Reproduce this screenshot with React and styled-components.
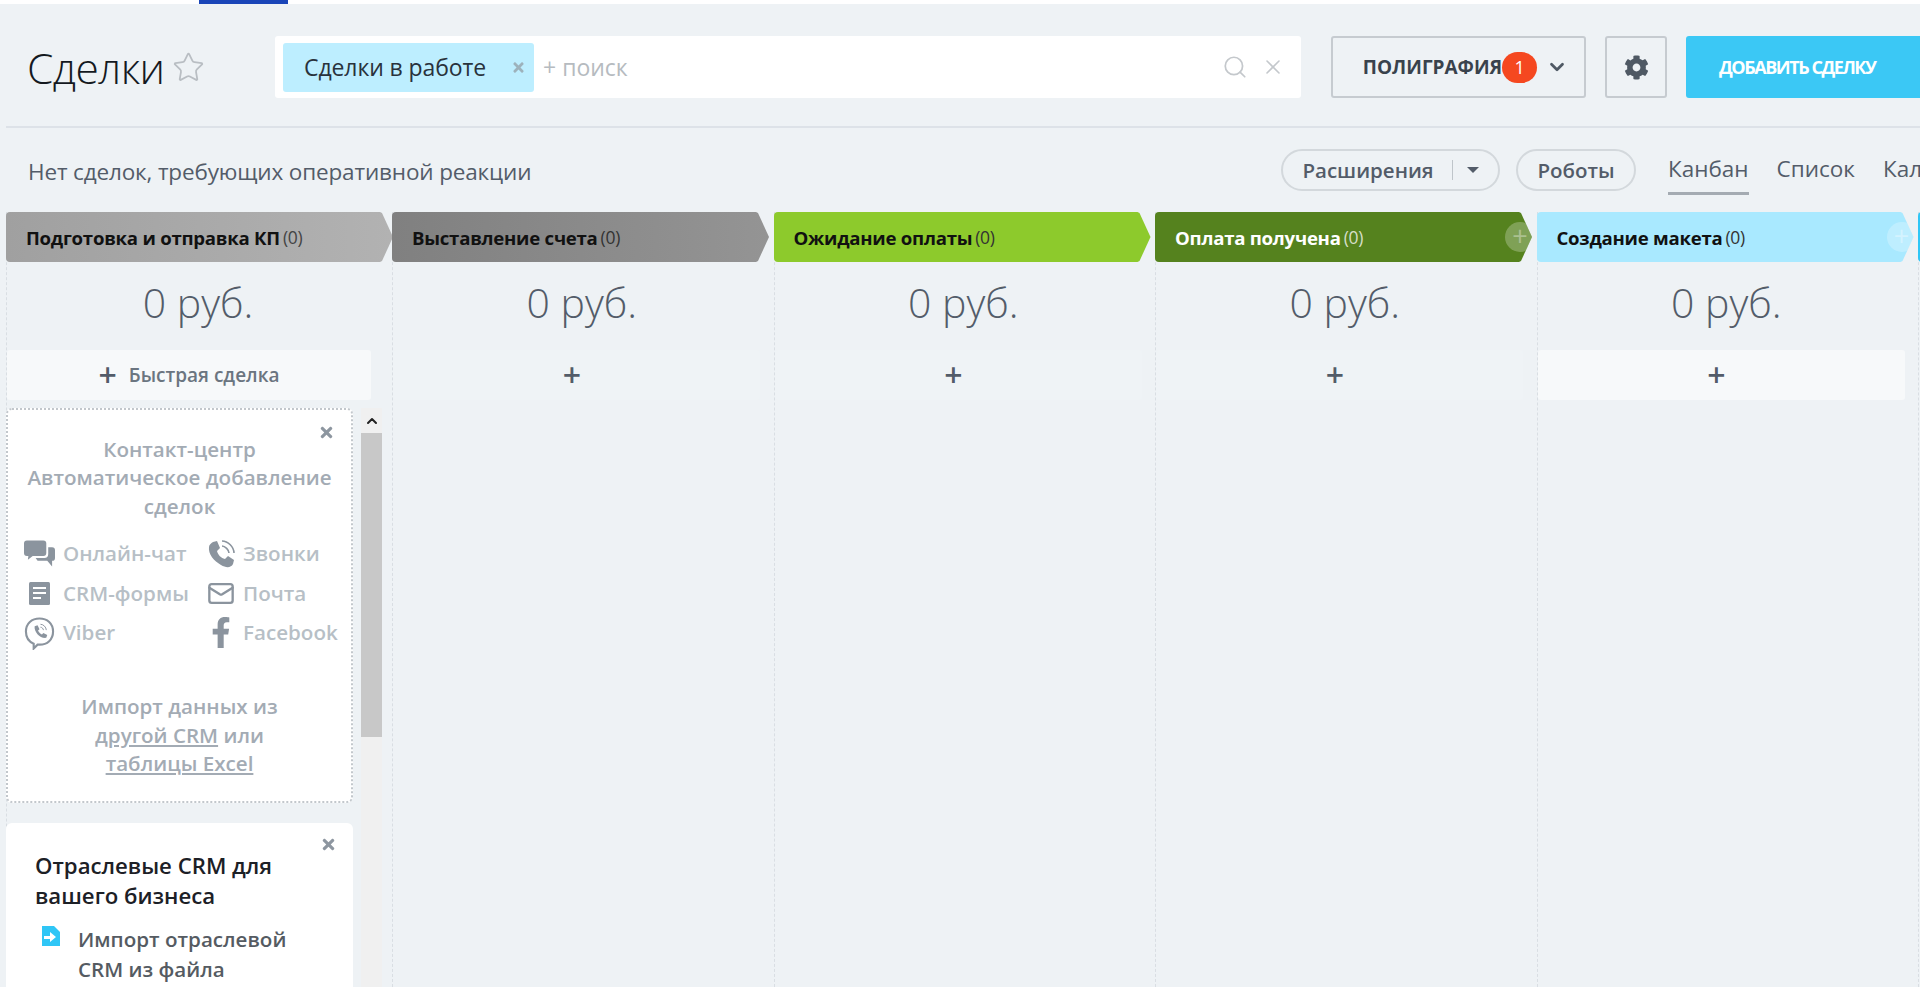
import React from "react";
import styled, { createGlobalStyle } from "styled-components";
import { Star, Search, X, ChevronDown, Mail } from "lucide-react";
import { FaCog, FaFacebookF, FaTimes } from "react-icons/fa";

const GlobalStyle = createGlobalStyle`
  html, body { margin: 0; padding: 0; background: #eef2f5; }
  body { font-family: "Open Sans", "Noto Sans", sans-serif; overflow: hidden; }
  * { box-sizing: border-box; }
`;

const Page = styled.div`
  width: 1920px;
  height: 987px;
  overflow: hidden;
  display: flex;
  flex-direction: column;
  background: #eef2f5;
`;
const TopBar = styled.div`
  height: 4px;
  background: #fff;
  padding-left: 199px;
  flex: none;
`;
const TopTab = styled.div`
  width: 89px;
  height: 4px;
  background: #1a45b8;
`;
const Header = styled.div`
  height: 124px;
  margin-left: 6px;
  padding: 32px 0 28px 21px;
  display: flex;
  align-items: stretch;
  border-bottom: 2px solid #dde2e8;
  flex: none;
`;
const TitleWrap = styled.div`
  width: 248px;
  display: flex;
  align-items: center;
  gap: 7px;
  color: #b9bec3;
  flex: none;
`;
const Title = styled.h1`
  margin: 0;
  font-size: 42.5px;
  font-weight: 300;
  color: #14191f;
  letter-spacing: -0.6px;
`;
const SearchBox = styled.div`
  width: 1026px;
  background: #fff;
  border-radius: 3px;
  padding: 7px 8px;
  display: flex;
  align-items: center;
  color: #c4c8cc;
  flex: none;
`;
const Tag = styled.div`
  width: 251px;
  height: 49px;
  padding: 0 8px 0 21px;
  display: flex;
  align-items: center;
  justify-content: space-between;
  background: #bdeeff;
  border-radius: 3px;
  font-size: 23px;
  color: #29323c;
  letter-spacing: -0.1px;
  white-space: nowrap;
`;
const TagClose = styled.span`
  display: flex;
  color: #9db2bc;
`;
const SearchText = styled.span`
  margin-left: 9px;
  flex: 1;
  font-size: 23px;
  color: #b6bbc0;
`;
const SearchIcons = styled.div`
  display: flex;
  align-items: center;
  gap: 13px;
  padding-right: 8px;
`;
const OutlineButton = styled.div`
  width: ${(p) => p.$w}px;
  margin-left: ${(p) => p.$ml}px;
  padding-left: ${(p) => p.$pl || 0}px;
  border: 2px solid #c6cbd0;
  border-radius: 3px;
  display: flex;
  align-items: center;
  justify-content: center;
  color: #4f5964;
  font-size: 19px;
  font-weight: 700;
  flex: none;
`;
const GroupLabel = styled.span`
  color: #39424c;
`;
const Badge = styled.span`
  width: 35px;
  height: 31px;
  margin: 0 9px 0 0;
  border-radius: 16px;
  background: #f54820;
  color: #fff;
  font-size: 18px;
  font-weight: 400;
  display: flex;
  align-items: center;
  justify-content: center;
`;
const AddButton = styled.div`
  width: 235px;
  margin-left: 19px;
  padding-left: 33px;
  background: #3bc8f5;
  border-radius: 3px 0 0 3px;
  color: #fff;
  font-size: 18px;
  font-weight: 700;
  display: flex;
  align-items: center;
  white-space: nowrap;
  letter-spacing: -1.45px;
  flex: none;
`;
const Toolbar = styled.div`
  height: 84px;
  padding: 21px 0 0 28px;
  display: flex;
  align-items: flex-start;
  flex: none;
`;
const Notice = styled.div`
  width: 1253px;
  height: 44px;
  display: flex;
  align-items: center;
  font-size: 22.5px;
  color: #535c69;
  letter-spacing: -0.15px;
  flex: none;
`;
const Pill = styled.div`
  height: 42px;
  width: ${(p) => p.$w}px;
  margin-right: 16px;
  border: 2px solid #d3d8dc;
  border-radius: 21px;
  display: flex;
  align-items: center;
  justify-content: center;
  font-size: 20.5px;
  font-weight: 600;
  color: #535c69;
  flex: none;
`;
const PillDivider = styled.span`
  width: 1px;
  height: 20px;
  background: #bfc5ca;
  margin: 0 14px 0 18px;
`;
const Caret = styled.span`
  width: 0;
  height: 0;
  border-left: 6px solid transparent;
  border-right: 6px solid transparent;
  border-top: 6px solid #535c69;
`;
const Views = styled.div`
  display: flex;
  gap: 28px;
  margin-left: 16px;
  white-space: nowrap;
`;
const View = styled.div`
  height: 46px;
  padding-top: 4px;
  font-size: 22.5px;
  color: #535c69;
  border-bottom: ${(p) => (p.$active ? "3px solid #a4abb2" : "3px solid transparent")};
`;
const Board = styled.div`
  flex: 1;
  min-height: 0;
  padding-left: 6px;
  display: grid;
  grid-template-columns: 386px repeat(5, 381.5px);
`;
const Column = styled.div`
  position: relative;
  border-left: 1px dashed #d9dee3;
  height: 775px;
  display: flex;
  flex-direction: column;
`;
const Stage = styled.div`
  position: relative;
  height: 50px;
  width: ${(p) => (p.$first ? 387 : 377)}px;
  margin-left: -1px;
  padding-left: 20px;
  display: flex;
  align-items: center;
  gap: 3px;
  background: ${(p) => p.$bg};
  border-radius: 4px 0 0 4px;
  clip-path: polygon(0 0, calc(100% - 13px) 0, calc(100% - 11px) 1px, 100% 25px, calc(100% - 11px) 49px, calc(100% - 13px) 50px, 0 50px);
  flex: none;
`;
const StageName = styled.span`
  font-size: 18.6px;
  font-weight: 700;
  letter-spacing: -0.25px;
  white-space: nowrap;
  color: ${(p) => p.$color};
`;
const StageCount = styled.span`
  font-size: 17.5px;
  letter-spacing: -0.3px;
  color: ${(p) => p.$color};
`;
const StagePlus = styled.span`
  position: absolute;
  left: 350px;
  top: 10px;
  width: 30px;
  height: 30px;
  border-radius: 50%;
  background: rgba(255, 255, 255, 0.25);
  color: rgba(255, 255, 255, 0.35);
  font-size: 27px;
  line-height: 28px;
  text-align: center;
`;
const Sum = styled.div`
  height: 88px;
  padding: 0 3px 8px 0;
  display: flex;
  align-items: center;
  justify-content: center;
  font-size: 41px;
  font-weight: 300;
  color: #535c69;
  flex: none;
`;
const QuickAdd = styled.div`
  height: 50px;
  width: ${(p) => (p.$first ? 364 : 367)}px;
  padding-right: ${(p) => (p.$first ? 0 : 9)}px;
  border-radius: 3px;
  background: ${(p) => (p.$bright ? "#f7f9fa" : "#eff3f6")};
  display: flex;
  align-items: center;
  justify-content: center;
  gap: 12px;
  font-size: 19px;
  font-weight: 600;
  color: #6b7580;
  flex: none;
`;
const PlusMark = styled.span`
  font-size: 32px;
  font-weight: 600;
  line-height: 30px;
  color: #535c69;
`;
const ColumnBody = styled.div`
  margin-top: 8px;
  margin-left: -1px;
  width: 376px;
  flex: 1;
  min-height: 0;
  overflow: hidden;
  display: flex;
  gap: 8px;
`;
const Cards = styled.div`
  width: 347px;
  display: flex;
  flex-direction: column;
  gap: 20px;
  flex: none;
`;
const HelpCard = styled.div`
  position: relative;
  height: 395px;
  padding: 25px 8px 0;
  background: #fff;
  border: 2px dotted #c2c7cc;
  border-radius: 6px;
  text-align: center;
  color: #a3abb4;
  font-size: 20.6px;
  font-weight: 600;
  line-height: 28.3px;
  flex: none;
`;
const CloseMark = styled.span`
  position: absolute;
  right: 16px;
  top: ${(p) => p.$top}px;
  display: flex;
  color: #8d96a0;
`;
const Channels = styled.div`
  margin: 14px 0 40px 8px;
  display: grid;
  grid-template-columns: 183px 1fr;
  grid-auto-rows: 39.5px;
  text-align: left;
`;
const Channel = styled.div`
  display: flex;
  align-items: center;
  font-size: 20.6px;
  font-weight: 600;
  color: #b7bfc6;
  white-space: nowrap;
`;
const ChannelIcon = styled.span`
  width: ${(p) => p.$w}px;
  margin-right: 8px;
  display: flex;
  justify-content: center;
  color: #8b949e;
  flex: none;
`;
const Underlined = styled.span`
  text-decoration: underline;
`;
const Scrollbar = styled.div`
  width: 21px;
  background: #f0f0f0;
  display: flex;
  flex-direction: column;
  flex: none;
`;
const ScrollArrow = styled.div`
  height: 25px;
  display: flex;
  align-items: center;
  justify-content: center;
  color: #222;
`;
const ScrollThumb = styled.div`
  height: 304px;
  background: #c8c8c8;
`;
const PromoCard = styled.div`
  position: relative;
  flex: 1;
  padding: 28px 10px 0 29px;
  background: #fff;
  border-radius: 6px 6px 0 0;
`;
const PromoTitle = styled.div`
  font-size: 22.2px;
  font-weight: 600;
  line-height: 30px;
  color: #1c2026;
`;
const PromoItem = styled.div`
  margin-top: 13px;
  display: flex;
  gap: 18px;
  font-size: 20.6px;
  font-weight: 600;
  line-height: 30px;
  color: #555b62;
`;
const PromoIcon = styled.span`
  padding: 2px 0 0 7px;
  display: flex;
  align-items: flex-start;
  flex: none;
`;

const stages = [
  { name: "Подготовка и отправка КП", bg: "linear-gradient(90deg, #a0a0a0, #b2b2b2)", color: "#111", count: "#444" },
  { name: "Выставление счета", bg: "linear-gradient(90deg, #808080, #949494)", color: "#111", count: "#333" },
  { name: "Ожидание оплаты", bg: "#8dca2c", color: "#111", count: "#333" },
  { name: "Оплата получена", bg: "#55821e", color: "#fff", count: "#d5dfc8", plus: true },
  { name: "Создание макета", bg: "#a9e9ff", color: "#111", count: "#333", plus: true, bright: true },
];

const ChatIcon = () => (
  <svg width="32" height="28" viewBox="0 0 32 28">
    <path
      d="M3 0h17a3 3 0 0 1 3 3v10a3 3 0 0 1-3 3H9l-5 4 .5-4H3a3 3 0 0 1-3-3V3a3 3 0 0 1 3-3z"
      fill="currentColor"
    />
    <path
      d="M25 7h4a3 3 0 0 1 3 3v8a3 3 0 0 1-3 3v6l-5-6H14l-2-3h9a4 4 0 0 0 4-4z"
      fill="currentColor"
    />
  </svg>
);

const PhoneIcon = () => (
  <svg width="28" height="28" viewBox="0 0 28 28" fill="none">
    <path
      d="M6 2l4-1 3 7-3 3c1 4 4 7 8 8l3-3 6 4-1 4c-2 4-7 4-12 1C7 21 1 14 2 7c0-2 2-4 4-5z"
      fill="currentColor"
    />
    <path d="M15 1c6 0 12 6 12 12M15 6c3 0 7 4 7 7" stroke="currentColor" strokeWidth="1.600" />
  </svg>
);

const FormIcon = () => (
  <svg width="21" height="23" viewBox="0 0 21 23">
    <rect width="21" height="23" rx="1.500" fill="currentColor" />
    <path d="M4 6h13M4 11h13M4 16h8" stroke="#fff" strokeWidth="2.200" fill="none" />
  </svg>
);

const ViberIcon = () => (
  <svg width="32" height="34" viewBox="0 0 32 34" fill="none">
    <path
      d="M16 2c8 0 14 5 14 13.500S24 29 16 29h-2l-4 4v-5C5 26 2 21 2 15.500 2 7 8 2 16 2z"
      stroke="currentColor"
      strokeWidth="2.200"
    />
    <path
      d="M11 10l3-1 2 4-1.500 1.500c.8 2 2 3.200 4 4L20 17l4 2-1 3c-6 1-13-6-12-12z"
      fill="currentColor"
    />
    <path d="M17 8c3 0 6 3 6 6M17 11c1.500 0 3 1.500 3 3" stroke="currentColor" strokeWidth="1" />
  </svg>
);

const ImportIcon = () => (
  <svg width="18" height="20" viewBox="0 0 18 20">
    <path d="M0 0h12l6 6v14H0z" fill="#2fc6f6" />
    <path d="M2 10h6V6l6 5-6 5v-3H2z" fill="#fff" />
  </svg>
);

const channels = [
  { icon: <ChatIcon />, w: 31, label: "Онлайн-чат" },
  { icon: <PhoneIcon />, w: 28, label: "Звонки" },
  { icon: <FormIcon />, w: 31, label: "CRM-формы" },
  { icon: <Mail size={29} strokeWidth={2} />, w: 28, label: "Почта" },
  { icon: <ViberIcon />, w: 31, label: "Viber" },
  { icon: <FaFacebookF size={31} />, w: 28, label: "Facebook" },
];

const App = () => {
  return (
    <Page>
      <GlobalStyle />
      <TopBar>
        <TopTab />
      </TopBar>
      <Header>
        <TitleWrap>
          <Title>Сделки</Title>
          <Star size={33} strokeWidth={1.3} />
        </TitleWrap>
        <SearchBox>
          <Tag>
            Сделки в работе
            <TagClose>
              <FaTimes size={15} />
            </TagClose>
          </Tag>
          <SearchText>+ поиск</SearchText>
          <SearchIcons>
            <Search size={26} strokeWidth={1.6} />
            <X size={24} strokeWidth={1.6} />
          </SearchIcons>
        </SearchBox>
        <OutlineButton $w={255} $ml={30} $pl={14}>
          <GroupLabel>ПОЛИГРАФИЯ</GroupLabel>
          <Badge>1</Badge>
          <ChevronDown size={22} strokeWidth={3} />
        </OutlineButton>
        <OutlineButton $w={62} $ml={19}>
          <FaCog size={25} />
        </OutlineButton>
        <AddButton>ДОБАВИТЬ СДЕЛКУ</AddButton>
      </Header>
      <Toolbar>
        <Notice>Нет сделок, требующих оперативной реакции</Notice>
        <Pill $w={219}>
          Расширения
          <PillDivider />
          <Caret />
        </Pill>
        <Pill $w={120}>Роботы</Pill>
        <Views>
          <View $active>Канбан</View>
          <View>Список</View>
          <View>Календарь</View>
        </Views>
      </Toolbar>
      <Board>
        {stages.map((s, i) => (
          <Column key={s.name}>
            <Stage $bg={s.bg} $first={i === 0}>
              <StageName $color={s.color}>{s.name}</StageName>
              <StageCount $color={s.count}>(0)</StageCount>
              {s.plus && <StagePlus>+</StagePlus>}
            </Stage>
            <Sum>0 руб.</Sum>
            <QuickAdd $first={i === 0} $bright={i === 0 || s.bright}>
              <PlusMark>+</PlusMark>
              {i === 0 && "Быстрая сделка"}
            </QuickAdd>
            {i === 0 && (
              <ColumnBody>
                <Cards>
                  <HelpCard>
                    <CloseMark $top={14}>
                      <FaTimes size={17} />
                    </CloseMark>
                    Контакт-центр
                    <br />
                    Автоматическое добавление сделок
                    <Channels>
                      {channels.map((c) => (
                        <Channel key={c.label}>
                          <ChannelIcon $w={c.w}>{c.icon}</ChannelIcon>
                          {c.label}
                        </Channel>
                      ))}
                    </Channels>
                    Импорт данных из
                    <br />
                    <Underlined>другой CRM</Underlined> или
                    <br />
                    <Underlined>таблицы Excel</Underlined>
                  </HelpCard>
                  <PromoCard>
                    <CloseMark $top={13}>
                      <FaTimes size={17} />
                    </CloseMark>
                    <PromoTitle>
                      Отраслевые CRM для
                      <br />
                      вашего бизнеса
                    </PromoTitle>
                    <PromoItem>
                      <PromoIcon>
                        <ImportIcon />
                      </PromoIcon>
                      <span>
                        Импорт отраслевой
                        <br />
                        CRM из файла
                      </span>
                    </PromoItem>
                  </PromoCard>
                </Cards>
                <Scrollbar>
                  <ScrollArrow>
                    <ChevronDown size={16} strokeWidth={3} style={{ transform: "rotate(180deg)" }} />
                  </ScrollArrow>
                  <ScrollThumb />
                </Scrollbar>
              </ColumnBody>
            )}
          </Column>
        ))}
        <Column>
          <Stage $bg="#2fc6f6" />
        </Column>
      </Board>
    </Page>
  );
};

export default App;
